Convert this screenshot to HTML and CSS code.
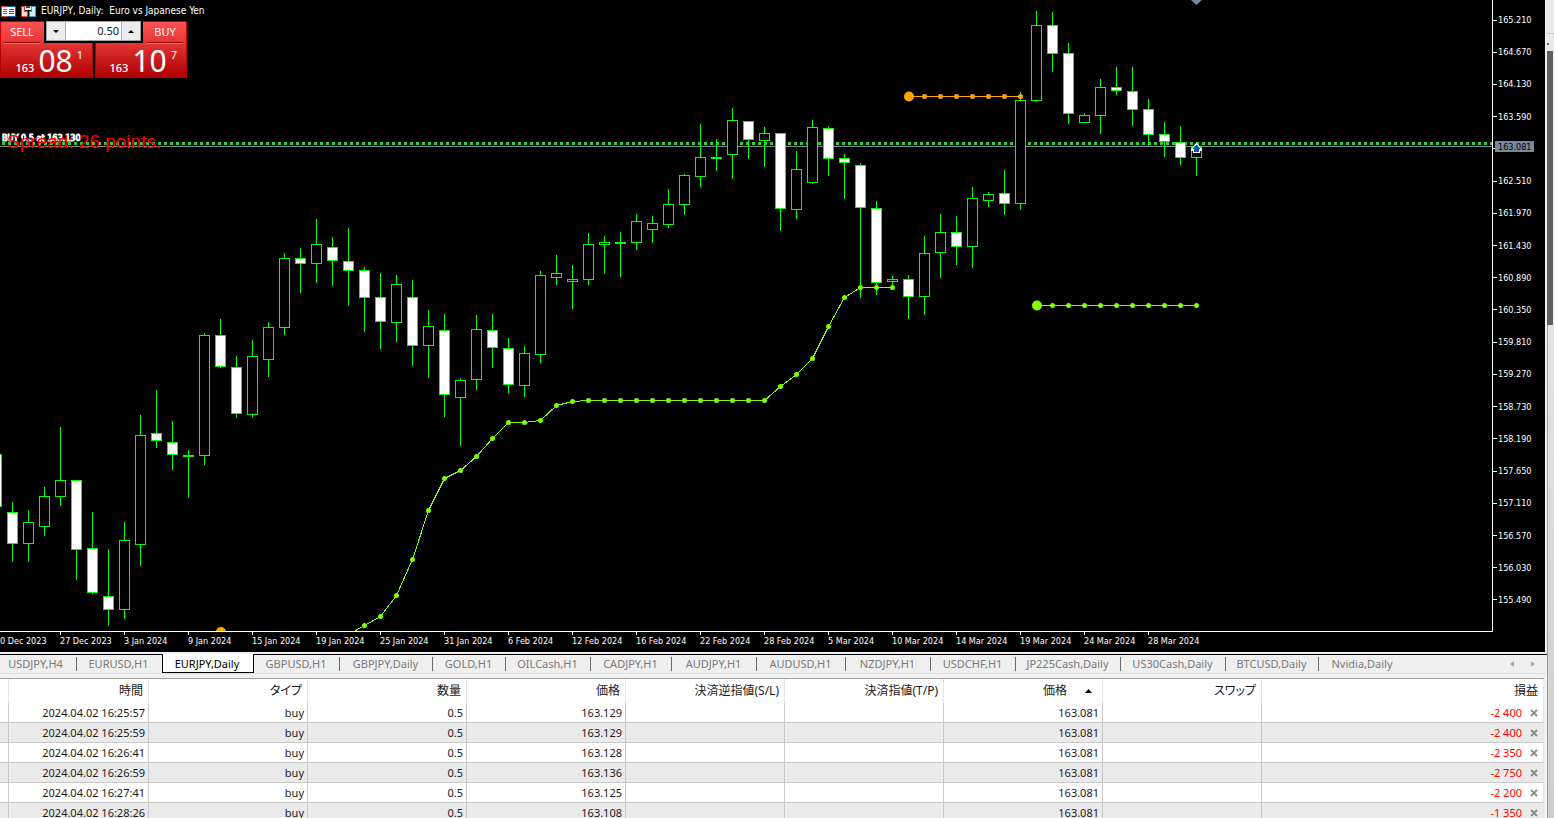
FILE: index.html
```html
<!DOCTYPE html>
<html lang="ja">
<head>
    <meta charset="UTF-8">
    <meta name="viewport" content="width=device-width, initial-scale=1.0">
    <title>EURJPY, Daily</title>
    <link rel="stylesheet" href="styles.css">
</head>
<body>
    <main class="terminal">

        <section class="chart">
            <div class="chart-body">
                <svg class="plot" id="plot"></svg>

                <div class="price-axis">
                    <div class="price-list" id="prices"></div>
                    <div class="price-now">163.081</div>
                </div>
            </div>
            <div class="time-axis" id="times"></div>

            <header class="chart-title">
                <svg width="15" height="11" viewBox="0 0 15 11">
                    <rect width="15" height="11" fill="#fff"/>
                    <path d="M0 0h7v1H1v9h6v1H0z" fill="#e03c31"/>
                    <path d="M7 0h8v11H7v-1h7V1H7z" fill="#0f5fa8"/>
                    <path d="M2 3.500h4M2 5.500h4M2 7.500h4" stroke="#e03c31"/>
                    <path d="M8 3.500h5M8 5.500h5M8 7.500h5" stroke="#0f5fa8"/>
                </svg>
                <svg width="15" height="11" viewBox="0 0 15 11">
                    <path d="M.5.5h3v5h3v5h-6z" fill="#ffd9d0" stroke="#e03c31"/>
                    <path d="M14.5.5h-4v5h-2v5h6z" fill="#cfe9fb" stroke="#3c9bdc"/>
                    <path d="M4 0h6v4H4z" fill="#fff"/>
                    <path d="M5 0h4v2H5z" fill="#444"/>
                </svg>
                <h1>EURJPY, Daily:&nbsp; Euro vs Japanese Yen</h1>
            </header>

            <div class="trade">
                <button class="deal sell" type="button">
                    <span class="side">SELL</span>
                    <span class="quote"><small>163</small><b>08</b><sup>1</sup></span>
                </button>
                <button class="deal buy" type="button">
                    <span class="side">BUY</span>
                    <span class="quote"><small>163</small><b>10</b><sup>7</sup></span>
                </button>
                <div class="volume">
                    <button type="button" aria-label="Decrease volume"><svg width="6" height="3" viewBox="0 0 6 3"><path d="M0 0h6L3 3z"/></svg></button>
                    <input type="text" value="0.50" aria-label="Volume">
                    <button type="button" aria-label="Increase volume"><svg width="6" height="3" viewBox="0 0 6 3"><path d="M0 3h6L3 0z"/></svg></button>
                </div>
            </div>
        </section>

        <nav class="tabs">
            <div class="tab-list">
                <button type="button">USDJPY,H4</button>
                <button type="button">EURUSD,H1</button>
                <button type="button" class="active">EURJPY,Daily</button>
                <button type="button">GBPUSD,H1</button>
                <button type="button">GBPJPY,Daily</button>
                <button type="button">GOLD,H1</button>
                <button type="button">OILCash,H1</button>
                <button type="button">CADJPY,H1</button>
                <button type="button">AUDJPY,H1</button>
                <button type="button">AUDUSD,H1</button>
                <button type="button">NZDJPY,H1</button>
                <button type="button">USDCHF,H1</button>
                <button type="button">JP225Cash,Daily</button>
                <button type="button">US30Cash,Daily</button>
                <button type="button">BTCUSD,Daily</button>
                <button type="button">Nvidia,Daily</button>
            </div>
            <div class="tab-scroll">
                <button type="button" aria-label="Previous"><svg width="4" height="6" viewBox="0 0 4 6"><path d="M4 0v6L0 3z"/></svg></button>
                <button type="button" aria-label="Next"><svg width="4" height="6" viewBox="0 0 4 6"><path d="M0 0v6l4-3z"/></svg></button>
            </div>
        </nav>

        <table class="positions">
            <colgroup>
                <col class="c-edge"><col class="c-time">
                <col class="c-std"><col class="c-std"><col class="c-std"><col class="c-std">
                <col class="c-std"><col class="c-std"><col class="c-std"><col>
            </colgroup>
            <thead>
                <tr>
                    <th></th>
                    <th>時間</th>
                    <th>タイプ</th>
                    <th>数量</th>
                    <th>価格</th>
                    <th>決済逆指値(S/L)</th>
                    <th>決済指値(T/P)</th>
                    <th class="sorted">価格<svg width="7" height="8" viewBox="0 0 7 8"><path d="M0 5h7L3.5 1z"/></svg></th>
                    <th>スワップ</th>
                    <th>損益</th>
                </tr>
            </thead>
            <tbody id="rows"></tbody>
        </table>
    </main>

    <aside class="side-strip">
        <div class="strip-top"></div>
        <div class="strip-arrow"></div>
        <div class="strip-thumb"></div>
        <div class="strip-rest"></div>
    </aside>

    <script src="script.js"></script>
</body>
</html>
```
FILE: styles.css
```css
* {
    box-sizing: border-box;
}

body {
    margin: 0;
    height: 100vh;
    overflow: hidden;
    display: flex;
    background: #f0f0f0;
    font-family: "Noto Sans", "Noto Sans CJK JP", sans-serif;
    font-size: 11px;
    color: #1a1a1a;
}

button {
    margin: 0;
    padding: 0;
    border: 0;
    background: none;
    font: inherit;
    color: inherit;
    cursor: pointer;
}

svg {
    display: block;
}

.terminal {
    flex: 1;
    min-width: 0;
}

/* chart */
.chart {
    position: relative;
    margin-right: 2px;
    background: #000;
    color: #fff;
    font-family: "DejaVu Sans Condensed", "DejaVu Sans", sans-serif;
    font-size: 9px;
    line-height: 12px;
}

.chart-body {
    display: flex;
}

.plot {
    flex: 1;
    min-width: 0;
    height: 631px;
    overflow: hidden;
}

.price-axis {
    position: relative;
    width: 53px;
    padding: 14px 0 25px;
    border-left: 1px solid #fff;
}

.price-list {
    height: 100%;
    display: flex;
    flex-direction: column;
    justify-content: space-between;
}

.price-list div {
    height: 12px;
    display: flex;
    align-items: center;
    gap: 1px;
}

.price-list div::before {
    content: "";
    width: 4px;
    height: 1px;
    background: #fff;
}

.price-now {
    position: absolute;
    left: 2px;
    top: 141px;
    width: 39px;
    height: 11px;
    line-height: 12px;
    padding-left: 3px;
    background: #778899;
    color: #000;
}

.time-axis {
    display: flex;
    height: 21px;
    margin-right: 52px;
    border-top: 1px solid #fff;
    overflow: hidden;
}

.time-axis div {
    flex: 0 0 64px;
    padding-top: 3px;
    white-space: nowrap;
    background: linear-gradient(#fff, #fff) no-repeat 0 0 / 1px 3px;
}

.time-axis div:first-child {
    flex-basis: 60px;
    background: none;
}

.chart-title {
    position: absolute;
    left: 1px;
    top: 5px;
    display: flex;
    align-items: center;
    gap: 5px;
}

.chart-title h1 {
    margin: 0;
    font-size: 10px;
    font-weight: normal;
    line-height: 12px;
}

/* one click trading */
.trade {
    position: absolute;
    left: 0;
    top: 21px;
    display: flex;
    gap: 2px;
    font-family: "Noto Sans", sans-serif;
}

.deal {
    width: 93px;
    height: 57px;
    display: flex;
    flex-direction: column;
    border: 1px solid #b80000;
    background: linear-gradient(#ff5252, #e23434 40%, #ae0000);
    color: #fff;
}

.sell {
    clip-path: polygon(0 0, 44px 0, 44px 22px, 100% 22px, 100% 100%, 0 100%);
}

.buy {
    width: 92px;
    align-items: flex-end;
    clip-path: polygon(48px 0, 100% 0, 100% 100%, 0 100%, 0 22px, 48px 22px);
}

.side {
    width: 36px;
    height: 21px;
    margin: 0 3px;
    border-bottom: 1px solid #900000;
    box-shadow: 0 1px #ff7070;
    font-size: 11px;
    line-height: 19px;
    text-align: center;
}

.quote {
    width: 100%;
    display: flex;
    align-items: baseline;
    justify-content: flex-end;
    gap: 4px;
    height: 34px;
    padding-right: 9px;
    line-height: 36px;
}

.quote small {
    font-size: 11px;
    font-weight: 500;
}

.quote b {
    font-size: 30px;
    font-weight: normal;
}

.quote sup {
    align-self: flex-start;
    font-size: 11px;
    line-height: 24px;
}

.volume {
    position: absolute;
    left: 46px;
    top: 0;
    width: 95px;
    height: 20px;
    display: flex;
    border: 1px solid #a0a0a0;
    background: #fff;
}

.volume button {
    flex: 0 0 18px;
    display: flex;
    align-items: center;
    justify-content: center;
    background: #ececec;
}

.volume input {
    flex: 1;
    min-width: 0;
    padding: 0 2px;
    border: solid #b0b0b0;
    border-width: 0 1px;
    font: 11px/16px "Noto Sans", sans-serif;
    text-align: right;
    color: #1a1a1a;
}

/* plot drawing */
.candle {
    stroke: #00ff00;
    fill: #000;
}

.candle.down {
    fill: #fff;
}

.green {
    stroke: #7fff00;
    fill: none;
}

.orange {
    stroke: #ffa500;
    fill: none;
}

.green-dot {
    fill: #7fff00;
}

.orange-dot {
    fill: #ffa500;
}

.order-line {
    stroke: #32cd32;
    stroke-width: 3;
    stroke-dasharray: 3 3;
}

.bid-line {
    stroke: #778899;
}

.order-text {
    fill: #fff;
    stroke: #fff;
}

.spread-text {
    fill: #ff0000;
    font-family: "Liberation Sans", sans-serif;
    font-size: 19px;
}

/* chart tabs */
.tabs {
    display: flex;
    justify-content: space-between;
    height: 20px;
    margin-top: 2px;
    border-bottom: 1px solid #e0e0e0;
    background: linear-gradient(#000, #000) no-repeat 0 0 / 100% 1px, #efefef;
    color: #7a7a7a;
}

.tab-list {
    display: grid;
    grid-template-columns: 77px 85px 92px 86px 93px 73px 85px 81px 85px 89px 85px 85px 105px 105px 93px 88px;
}

.tab-list button {
    position: relative;
    height: 19px;
    padding-right: 2px;
    white-space: nowrap;
}

.tab-list button:first-child {
    padding-right: 6px;
}

.tab-list button::after {
    content: "";
    position: absolute;
    right: 0;
    top: 3px;
    width: 1px;
    height: 14px;
    background: #6a6a6a;
}

.tab-list .active::after,
.tab-list button:nth-child(2)::after,
.tab-list button:last-child::after {
    display: none;
}

.tab-list .active {
    border: solid #000;
    border-width: 0 1px 1px;
    background: #fff;
    color: #000;
}

.tab-scroll {
    display: flex;
    gap: 17px;
    padding-right: 12px;
    fill: #a8a8a8;
}

/* open positions */
.positions {
    width: calc(100% - 3px);
    margin-top: 4px;
    border-top: 1px solid #a0a0a0;
    border-collapse: separate;
    border-spacing: 0;
    table-layout: fixed;
    background: #fff;
}

.c-edge {
    width: 9px;
}

.c-time {
    width: 140px;
}

.c-std {
    width: 159px;
}

.positions th {
    height: 24px;
    padding: 0 5px 0 0;
    border-right: 1px solid #e5e5e5;
    font-size: 12px;
    font-weight: normal;
    line-height: 22px;
    text-align: right;
    font-feature-settings: "palt";
}

.positions .sorted {
    padding-right: 10px;
}

.sorted svg {
    display: inline-block;
    margin-left: 18px;
    vertical-align: middle;
}

.positions td {
    height: 20px;
    padding: 0 3px 0 0;
    border-right: 1px solid #c8c8c8;
    border-bottom: 1px solid #c8c8c8;
    line-height: 19px;
    text-align: right;
}

.positions tr:nth-child(even) td {
    background: #eaeaea;
}

.positions td:last-child {
    padding-right: 5px;
    border-right-color: #e5e5e5;
    color: #ff0000;
}

.close {
    margin-left: 8px;
    vertical-align: middle;
}

.close svg {
    stroke: #909090;
    stroke-width: 2;
}

/* strip at the window edge */
.side-strip {
    width: 7px;
    display: flex;
    flex-direction: column;
    background: #e8e8e8;
}

.strip-top {
    height: 34px;
    border-bottom: 1px solid #c8c8c8;
}

.strip-arrow {
    height: 17px;
    background: linear-gradient(#606060, #606060) no-repeat 0 9px / 2px 2px;
}

.strip-thumb {
    width: 6px;
    height: 274px;
    background: #606060;
}

.strip-rest {
    flex: 1;
    border-left: 1px solid #a0a0a0;
    background: linear-gradient(#e4e4e4, #cccccc);
}
```
FILE: script.js
```javascript
// [high, body top, body bottom, low, down]
const candles = [
    [454, 454, 507, 507, 1], [502, 512, 544, 562, 1], [510, 522, 544, 562, 0], [487, 496, 527, 536, 0],
    [427, 480, 497, 506, 0], [480, 480, 550, 580, 1], [512, 548, 593, 594, 1], [549, 596, 610, 626, 1],
    [522, 540, 610, 619, 0], [415, 435, 545, 566, 0], [390, 433, 441, 448, 1], [421, 442, 455, 470, 1],
    [450, 455, 457, 498, 0], [333, 335, 456, 465, 0], [319, 335, 367, 368, 1], [356, 367, 414, 418, 1],
    [340, 356, 415, 418, 0], [322, 327, 360, 377, 0], [253, 258, 328, 335, 0], [248, 258, 264, 293, 1],
    [219, 244, 264, 283, 0], [237, 247, 261, 286, 1], [228, 261, 271, 306, 1], [267, 270, 298, 332, 1],
    [273, 297, 322, 349, 1], [275, 284, 323, 342, 0], [280, 297, 346, 366, 1], [310, 326, 346, 378, 0],
    [314, 330, 395, 417, 1], [378, 380, 398, 446, 0], [315, 329, 380, 390, 0], [314, 330, 348, 368, 1],
    [338, 348, 385, 393, 1], [346, 353, 386, 397, 0], [271, 275, 355, 363, 0], [255, 273, 278, 285, 0],
    [265, 279, 282, 309, 0], [233, 244, 280, 285, 0], [236, 242, 245, 274, 0], [232, 242, 244, 277, 0],
    [214, 221, 243, 250, 0], [216, 223, 230, 243, 0], [189, 204, 225, 228, 0], [174, 175, 205, 215, 0],
    [124, 157, 177, 187, 0], [139, 157, 159, 171, 0], [108, 120, 155, 179, 0], [121, 121, 140, 159, 1],
    [127, 133, 141, 167, 0], [133, 133, 209, 231, 1], [151, 169, 210, 219, 0], [120, 127, 183, 184, 0],
    [126, 128, 159, 176, 1], [154, 158, 163, 199, 1], [163, 165, 208, 298, 1], [201, 208, 283, 295, 1],
    [276, 279, 282, 287, 0], [275, 279, 297, 319, 1], [236, 253, 297, 315, 0], [214, 232, 253, 278, 0],
    [216, 232, 247, 265, 1], [187, 198, 247, 268, 0], [192, 194, 201, 207, 0], [170, 193, 204, 215, 1],
    [92, 100, 204, 210, 0], [11, 25, 101, 102, 0], [12, 25, 54, 72, 1], [43, 53, 114, 124, 1],
    [113, 115, 123, 123, 0], [79, 87, 116, 134, 0], [67, 87, 91, 95, 1], [67, 91, 110, 126, 1],
    [99, 109, 135, 146, 1], [122, 134, 142, 157, 1], [126, 142, 158, 165, 1], [146, 146, 158, 176, 0]
];

// y of each point of the rising stop line, 16px apart from x = 348
const stops = [634, 625, 616, 595, 559, 510, 478, 470, 456, 438, 422, 422, 420, 405, 401,
    400, 400, 400, 400, 400, 400, 400, 400, 400, 400, 400, 400, 386, 374, 358, 326, 297, 287, 287, 287];

function series(points, color) {
    let out = '<polyline class="' + color + '" shape-rendering="crispEdges" points="' + points.join(" ") + '"/>';
    for (const p of points) {
        out += '<circle class="' + color + '-dot" cx="' + p[0] + '" cy="' + p[1] + '" r="2.5"/>';
    }
    return out;
}

function flat(x1, x2, y) {
    const points = [];
    for (let x = x1; x <= x2; x += 16) {
        points.push([x + 0.5, y + 0.5]);
    }
    return points;
}

let svg = '<line class="order-line" x1="2" y1="143.5" x2="3000" y2="143.5"/>';
svg += '<line class="bid-line" x1="0" y1="146.5" x2="3000" y2="146.5"/>';

svg += '<g shape-rendering="crispEdges">';
candles.forEach(function (c, i) {
    const x = i * 16 - 4;
    const cls = c[4] ? "candle down" : "candle";
    svg += '<path class="' + cls + '" d="M' + (x + 0.5) + ' ' + c[0] + 'V' + c[3] + '"/>';
    svg += '<rect class="' + cls + '" x="' + (x - 4.5) + '" y="' + (c[1] + 0.5) + '" width="10" height="' + (c[2] - c[1] - 1) + '"/>';
});
svg += '</g>';

svg += series(stops.map((y, i) => [348.5 + i * 16, y + 0.5]), "green");
svg += series(flat(1036, 1196, 305), "green");
svg += series(flat(908, 1020, 96), "orange");
svg += '<circle class="green-dot" cx="1037" cy="305.5" r="5"/>';
svg += '<circle class="orange-dot" cx="909" cy="96.5" r="5"/>';
svg += '<circle class="orange-dot" cx="221" cy="632" r="5"/>';

// last bar marker and entry arrow
svg += '<path fill="#778899" d="M1191 0h11l-5.500 5z"/>';
svg += '<path fill="#fff" d="M1196 143h1l5 6v2h-2v2h-7v-2h-2v-2z"/>';
svg += '<path fill="#0a5aa8" d="M1196 145h1l3 3v1h-1v3h-5v-3h-1v-1z"/>';

svg += '<text class="order-text" x="2" y="141">BUY 0.5 at 163.130</text>';
svg += '<text class="spread-text" x="7" y="148">Spread: 26 points.</text>';
document.getElementById("plot").innerHTML = svg;

// axes
const prices = ["165.210", "164.670", "164.130", "163.590", "", "162.510", "161.970", "161.430", "160.890", "160.350",
    "159.810", "159.270", "158.730", "158.190", "157.650", "157.110", "156.570", "156.030", "155.490"];
document.getElementById("prices").innerHTML = prices.map(p => "<div>" + p + "</div>").join("");

const times = ["0 Dec 2023", "27 Dec 2023", "3 Jan 2024", "9 Jan 2024", "15 Jan 2024", "19 Jan 2024", "25 Jan 2024",
    "31 Jan 2024", "6 Feb 2024", "12 Feb 2024", "16 Feb 2024", "22 Feb 2024", "28 Feb 2024", "5 Mar 2024",
    "10 Mar 2024", "14 Mar 2024", "19 Mar 2024", "24 Mar 2024", "28 Mar 2024"];
document.getElementById("times").innerHTML = times.map(t => "<div>" + t + "</div>").join("");

// open positions
const rows = [
    ["16:25:57", "163.129", "-2 400"],
    ["16:25:59", "163.129", "-2 400"],
    ["16:26:41", "163.128", "-2 350"],
    ["16:26:59", "163.136", "-2 750"],
    ["16:27:41", "163.125", "-2 200"],
    ["16:28:26", "163.108", "-1 350"]
];
const closeBtn = '<button type="button" class="close" aria-label="Close"><svg width="8" height="10" viewBox="0 0 8 10"><path d="M1 1l6 6M7 1L1 7"/></svg></button>';
document.getElementById("rows").innerHTML = rows.map(r =>
    "<tr><td></td><td>2024.04.02 " + r[0] + "</td><td>buy</td><td>0.5</td><td>" + r[1] +
    "</td><td></td><td></td><td>163.081</td><td></td><td>" + r[2] + closeBtn + "</td></tr>").join("");
```
